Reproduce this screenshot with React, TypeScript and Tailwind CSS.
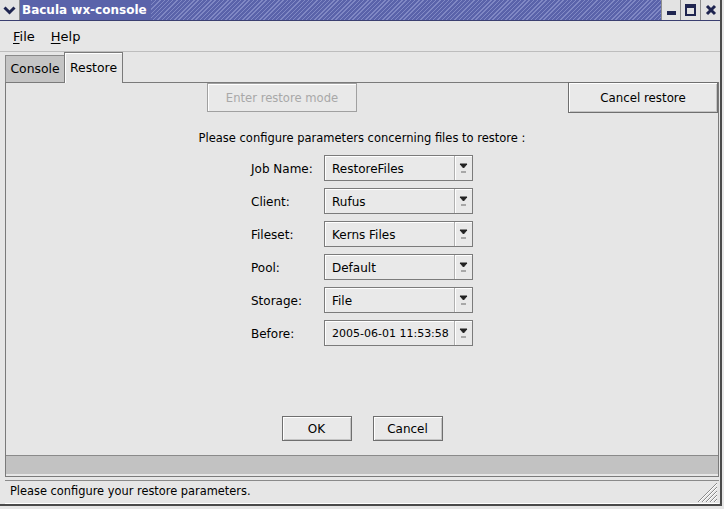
import React from 'react';

const rows = [
  ['Job Name:', 'RestoreFiles'],
  ['Client:', 'Rufus'],
  ['Fileset:', 'Kerns Files'],
  ['Pool:', 'Default'],
  ['Storage:', 'File'],
  ['Before:', '2005-06-01 11:53:58'],
];

function Combo({ value }: { value: string }) {
  const small = value.length > 14;
  return (
    <div className="flex h-[26px] w-[149px] border border-[#7b7b7b] bg-[#e9e9e9] shadow-[inset_1px_1px_0_#ffffff]">
      <div className={`flex flex-1 items-center overflow-hidden whitespace-nowrap pl-[7px] pt-[2px] ${small ? 'text-[11px]' : ''}`}>{value}</div>
      <div className="flex w-[18px] items-center justify-center border-l border-[#b0b0b0] shadow-[inset_1px_0_0_#ffffff]">
        <svg width="9" height="12" viewBox="0 0 9 12">
          <path d="M1 2h7L4.5 6z" fill="#222" stroke="#222" strokeWidth="1" strokeLinejoin="round" />
          <rect x="2" y="9" width="5" height="2" fill="#a8a8a8" />
        </svg>
      </div>
    </div>
  );
}

function Btn({ children, className = '', disabled = false }: { children: React.ReactNode; className?: string; disabled?: boolean }) {
  return (
    <div
      className={`flex items-center justify-center border bg-[#e9e9e9] ${
        disabled ? 'border-[#a0a0a0] text-[#a8a8a8] shadow-[inset_1px_1px_0_#ffffff]' : 'border-[#6f6f6f] shadow-[inset_1px_1px_0_#ffffff,inset_-1px_-1px_0_#c4c4c4]'
      } ${className}`}
    >
      {children}
    </div>
  );
}

export default function App() {
  return (
    <div className="relative h-[509px] w-[724px] overflow-hidden bg-[#e6e6e6] font-['DejaVu_Sans',sans-serif] text-[12px] text-black">
      <div className="flex h-[506px] w-[722px] flex-col border-r-2 border-b-2 border-[#4a4a4a]">
        {/* title bar */}
        <div className="flex h-[21px] border-b border-[#3a3f70] bg-[repeating-linear-gradient(135deg,#5a63aa_0px,#5a63aa_2px,#8088c4_2px,#8088c4_3px)]">
          <div className="flex w-[20px] items-center justify-center border-r border-[#8d8d8d] bg-[#e3e3e3]">
            <svg width="13" height="9" viewBox="0 0 13 9">
              <path d="M1.5 1.5l5 5 5-5" fill="none" stroke="#1f2550" strokeWidth="3" />
            </svg>
          </div>
          <div className="flex items-center bg-[#5a63aa] pl-[2px] pr-[4px] font-bold text-white">Bacula wx-console</div>
          <div className="flex-1" />
          <div className="flex">
            <div className="flex w-[19px] items-end justify-center border-l border-[#8d8d8d] bg-[#e3e3e3] pb-[5px]">
              <div className="h-[4px] w-[9px] bg-[#1f2550]" />
            </div>
            <div className="flex w-[20px] items-center justify-center border-l border-[#8d8d8d] bg-[#e3e3e3]">
              <div className="h-[12px] w-[11px] border-2 border-t-4 border-[#1f2550]" />
            </div>
            <div className="flex w-[20px] items-center justify-center border-l border-[#8d8d8d] bg-[#e3e3e3]">
              <svg width="12" height="12" viewBox="0 0 12 12">
                <path d="M2 2l8 8M10 2l-8 8" stroke="#1f2550" strokeWidth="3" />
              </svg>
            </div>
          </div>
        </div>

        {/* menu bar */}
        <div className="flex h-[31px] items-center gap-[16px] border-b border-[#bdbdbd] pl-[13px] pt-[2px] text-[13px]">
          <span>
            <span className="underline underline-offset-2">F</span>ile
          </span>
          <span>
            <span className="underline underline-offset-2">H</span>elp
          </span>
        </div>

        {/* tabs */}
        <div className="flex h-[30px] items-end pl-[5px] pt-[1px] text-[12.4px]">
          <div className="flex h-[27px] w-[59px] items-center justify-center border-t border-l border-[#8a8a8a] bg-[#c4c4c4] pt-[1px]">Console</div>
          <div className="relative top-[1px] flex h-[31px] w-[59px] items-center justify-center border-x border-t border-[#7a7a7a] bg-[#e6e6e6] shadow-[inset_1px_1px_0_#ffffff]">
            Restore
          </div>
        </div>

        {/* panel */}
        <div className="ml-[5px] mr-[1px] flex flex-1 flex-col border border-[#7a7a7a]">
          <div className="flex h-[372px] flex-col bg-[#e6e6e6]">
            <div className="flex items-start">
              <Btn disabled className="ml-[201px] h-[29px] w-[150px] pt-[2px] text-[11.6px]">
                Enter restore mode
              </Btn>
              <div className="flex-1" />
              <Btn className="-mt-[1px] h-[31px] w-[150px] pt-[3px] text-[11.8px]">Cancel restore</Btn>
            </div>
            <div className="mt-[17px] text-center text-[11.5px]">Please configure parameters concerning files to restore :</div>
            <div className="mx-auto mt-[8px] grid grid-cols-[73px_149px] gap-y-[7px]">
              {rows.map(([label, value]) => (
                <React.Fragment key={label}>
                  <div className="flex items-center pt-[1px]">{label}</div>
                  <Combo value={value} />
                </React.Fragment>
              ))}
            </div>
            <div className="mt-[70px] flex justify-center gap-[21px] text-[12px]">
              <Btn className="h-[25px] w-[70px]">OK</Btn>
              <Btn className="h-[25px] w-[70px]">Cancel</Btn>
            </div>
          </div>
          <div className="h-[19px] border-t border-[#8a8a8a] bg-[#c2c2c2]" />
        </div>

        {/* status bar */}
        <div className="relative ml-[5px] mr-[1px] mt-[3px] flex h-[24px] items-center border-t border-[#8a8a8a] border-b border-b-white pl-[5px] text-[11.4px]">
          Please configure your restore parameters.
          <svg className="absolute right-[2px] bottom-[1px]" width="20" height="20" viewBox="0 0 20 20">
            {[0, 4, 8, 12, 16].map((o) => (
              <g key={o}>
                <path d={`M${20 - o - 3} 20L20 ${20 - o - 3}`} stroke="#8a8a8a" strokeWidth="1" />
                <path d={`M${20 - o - 2} 20L20 ${20 - o - 2}`} stroke="#ffffff" strokeWidth="1" />
              </g>
            ))}
          </svg>
        </div>
      </div>
    </div>
  );
}
